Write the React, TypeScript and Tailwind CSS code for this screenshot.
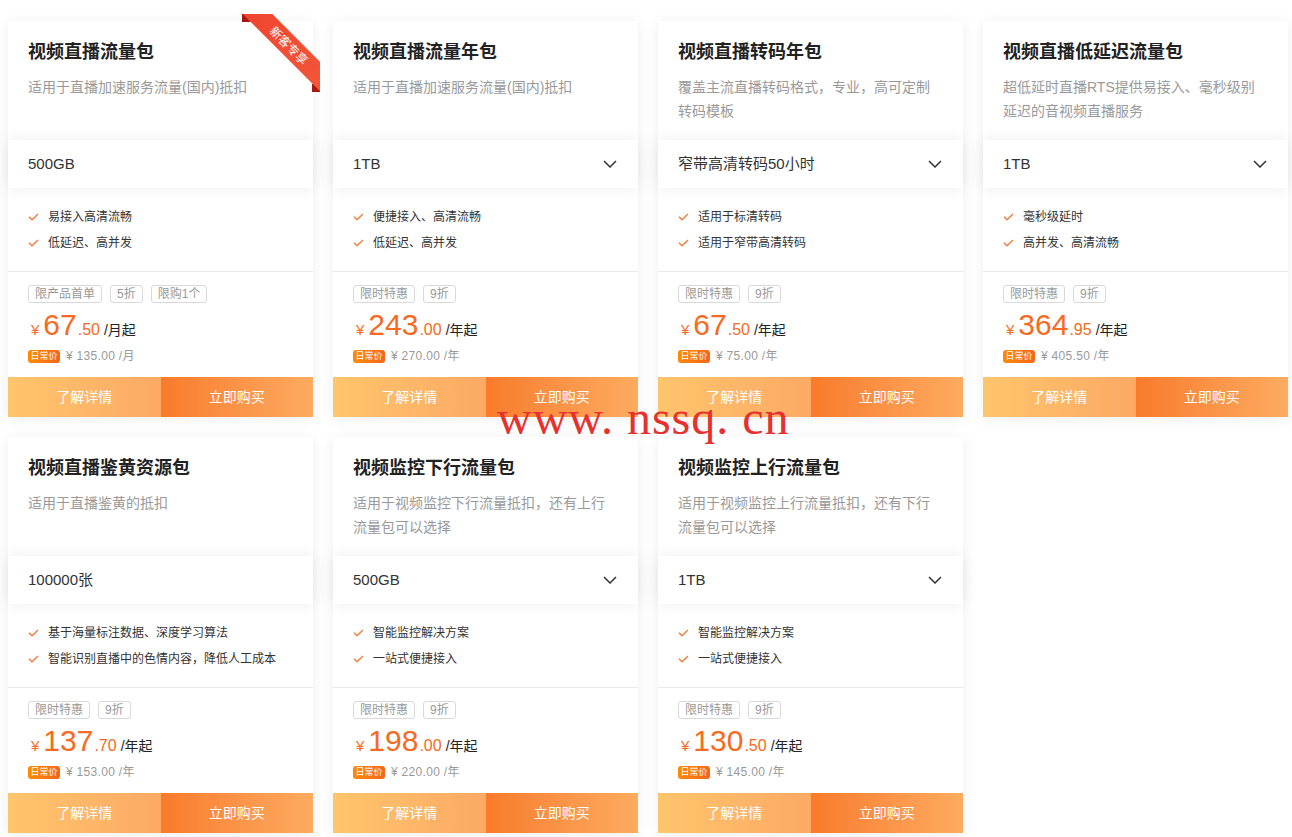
import React from 'react';

type Pack = {
  title: string;
  desc: string[];
  spec: string;
  dropdown: boolean;
  features: string[];
  tags: string[];
  int: string;
  dec: string;
  unit: string;
  orig: string;
  ribbon?: boolean;
};

const packs: Pack[] = [
  {
    title: '视频直播流量包',
    desc: ['适用于直播加速服务流量(国内)抵扣'],
    spec: '500GB',
    dropdown: false,
    features: ['易接入高清流畅', '低延迟、高并发'],
    tags: ['限产品首单', '5折', '限购1个'],
    int: '67',
    dec: '.50',
    unit: '/月起',
    orig: '¥ 135.00 /月',
    ribbon: true,
  },
  {
    title: '视频直播流量年包',
    desc: ['适用于直播加速服务流量(国内)抵扣'],
    spec: '1TB',
    dropdown: true,
    features: ['便捷接入、高清流畅', '低延迟、高并发'],
    tags: ['限时特惠', '9折'],
    int: '243',
    dec: '.00',
    unit: '/年起',
    orig: '¥ 270.00 /年',
  },
  {
    title: '视频直播转码年包',
    desc: ['覆盖主流直播转码格式，专业，高可定制', '转码模板'],
    spec: '窄带高清转码50小时',
    dropdown: true,
    features: ['适用于标清转码', '适用于窄带高清转码'],
    tags: ['限时特惠', '9折'],
    int: '67',
    dec: '.50',
    unit: '/年起',
    orig: '¥ 75.00 /年',
  },
  {
    title: '视频直播低延迟流量包',
    desc: ['超低延时直播RTS提供易接入、毫秒级别', '延迟的音视频直播服务'],
    spec: '1TB',
    dropdown: true,
    features: ['毫秒级延时', '高并发、高清流畅'],
    tags: ['限时特惠', '9折'],
    int: '364',
    dec: '.95',
    unit: '/年起',
    orig: '¥ 405.50 /年',
  },
  {
    title: '视频直播鉴黄资源包',
    desc: ['适用于直播鉴黄的抵扣'],
    spec: '100000张',
    dropdown: false,
    features: ['基于海量标注数据、深度学习算法', '智能识别直播中的色情内容，降低人工成本'],
    tags: ['限时特惠', '9折'],
    int: '137',
    dec: '.70',
    unit: '/年起',
    orig: '¥ 153.00 /年',
  },
  {
    title: '视频监控下行流量包',
    desc: ['适用于视频监控下行流量抵扣，还有上行', '流量包可以选择'],
    spec: '500GB',
    dropdown: true,
    features: ['智能监控解决方案', '一站式便捷接入'],
    tags: ['限时特惠', '9折'],
    int: '198',
    dec: '.00',
    unit: '/年起',
    orig: '¥ 220.00 /年',
  },
  {
    title: '视频监控上行流量包',
    desc: ['适用于视频监控上行流量抵扣，还有下行', '流量包可以选择'],
    spec: '1TB',
    dropdown: true,
    features: ['智能监控解决方案', '一站式便捷接入'],
    tags: ['限时特惠', '9折'],
    int: '130',
    dec: '.50',
    unit: '/年起',
    orig: '¥ 145.00 /年',
  },
];

function Check() {
  return (
    <svg width="11" height="8" viewBox="0 0 11 8" fill="none" className="shrink-0">
      <polyline points="1,3.8 4,6.8 10,1" stroke="#f07a3a" strokeWidth="1.3" />
    </svg>
  );
}

function Chevron() {
  return (
    <svg width="14" height="8" viewBox="0 0 14 8" fill="none">
      <polyline points="1,1 7,7 13,1" stroke="#333" strokeWidth="1.5" />
    </svg>
  );
}

function Ribbon() {
  return (
    <div className="absolute -top-[7px] -right-[7px] w-[78px] h-[78px] overflow-hidden z-20">
      <div className="absolute top-0 left-0 w-[8px] h-[8px] bg-[#a8160f]" />
      <div className="absolute bottom-0 right-0 w-[8px] h-[8px] bg-[#a8160f]" />
      <div className="absolute left-[-13px] top-[21px] w-[120px] h-[21px] rotate-45 bg-gradient-to-r from-[#f0442f] to-[#f2573a] flex items-center justify-center text-white text-[12px] leading-none">
        新客专享
      </div>
    </div>
  );
}

function PackCard({ p }: { p: Pack }) {
  return (
    <div className="relative bg-white shadow-[0_2px_14px_rgba(0,0,0,0.07)] flex flex-col">
      {p.ribbon && <Ribbon />}
      <div className="h-[119px] px-5 pt-[18px]">
        <h3 className="text-[18px] leading-[26px] font-bold text-[#222]">{p.title}</h3>
        <div className="mt-[10px] text-[14px] leading-[24px] text-[#999]">
          {p.desc.map((d) => (
            <div key={d}>{d}</div>
          ))}
        </div>
      </div>
      <div className="relative z-10 h-[48px] bg-white px-5 flex items-center justify-between shadow-[0_0_16px_rgba(0,0,0,0.08)]">
        <span className="text-[15px] text-[#333]">{p.spec}</span>
        {p.dropdown && (
          <span className="pr-[1px]">
            <Chevron />
          </span>
        )}
      </div>
      <ul className="px-5 pt-4 pb-[15px] border-b border-[#ebebeb]">
        {p.features.map((f) => (
          <li key={f} className="flex items-center gap-[9px] h-[26px] text-[12px] text-[#333]">
            <Check />
            {f}
          </li>
        ))}
      </ul>
      <div className="px-5 pt-[13px] h-[105px]">
        <div className="flex gap-2">
          {p.tags.map((t) => (
            <span
              key={t}
              className="h-[18px] px-[6px] border border-[#d9d9d9] rounded-[3px] text-[12px] leading-[16px] text-[#999]"
            >
              {t}
            </span>
          ))}
        </div>
        <div className="mt-[5px] flex items-baseline text-[#f76a22] h-[34px]">
          <span className="text-[15px] ml-[3px] mr-[4px]">¥</span>
          <span className="text-[30px] leading-[34px]">{p.int}</span>
          <span className="text-[16px] ml-[1px]">{p.dec}</span>
          <span className="text-[14px] text-[#222] ml-[4px]">{p.unit}</span>
        </div>
        <div className="mt-[5px] flex items-center gap-[6px]">
          <span className="w-[32px] h-[13px] rounded-[3px] bg-gradient-to-r from-[#ff8a00] to-[#f5661a] text-white text-[9px] leading-[13px] text-center">
            日常价
          </span>
          <span className="text-[12px] text-[#999] tracking-[0.3px]">{p.orig}</span>
        </div>
      </div>
      <div className="flex h-[40px] text-white text-[14px]">
        <button className="flex-1 bg-gradient-to-r from-[#ffc56c] to-[#fca964] flex items-center justify-center">
          了解详情
        </button>
        <button className="flex-1 bg-gradient-to-r from-[#f87b2a] to-[#fdab60] flex items-center justify-center">
          立即购买
        </button>
      </div>
    </div>
  );
}

export default function App() {
  return (
    <div
      className="relative min-h-[837px] bg-white pt-[21px] pl-2 pr-1"
      style={{ fontFamily: '"Liberation Sans", "Noto Sans CJK SC", sans-serif' }}
    >
      <div className="grid grid-cols-[repeat(4,305px)] gap-5">
        {packs.map((p) => (
          <PackCard key={p.title} p={p} />
        ))}
      </div>
      <div
        className="absolute left-[497px] top-[394px] z-30 text-[48px] leading-[48px] text-[#e6312e] tracking-[1px] whitespace-pre"
        style={{ fontFamily: '"Liberation Serif", serif' }}
      >
        www. nssq. cn
      </div>
    </div>
  );
}
